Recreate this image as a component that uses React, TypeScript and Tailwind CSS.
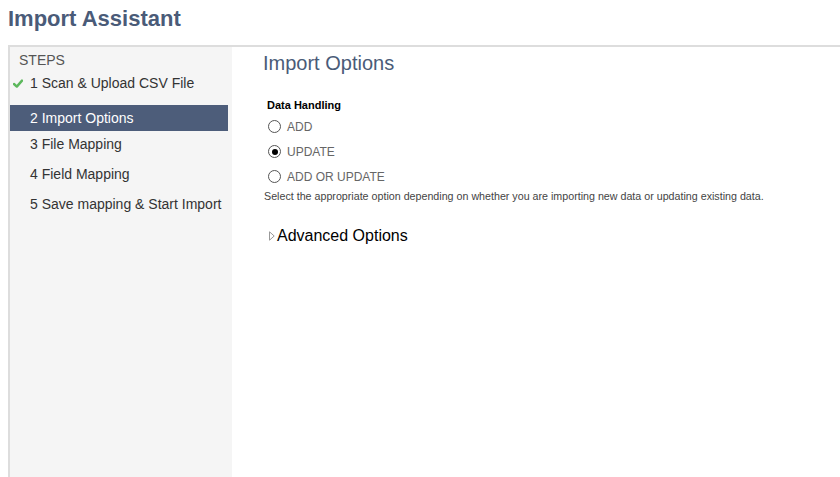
import React from 'react';

const steps = [
  { n: 1, label: 'Scan & Upload CSV File', done: true },
  { n: 2, label: 'Import Options', active: true },
  { n: 3, label: 'File Mapping' },
  { n: 4, label: 'Field Mapping' },
  { n: 5, label: 'Save mapping & Start Import' },
];

const options = ['ADD', 'UPDATE', 'ADD OR UPDATE'];

function Check() {
  return (
    <svg width="10" height="9" viewBox="0 0 10 9" className="mr-[7px]">
      <path d="M1 5 L3.8 7.6 L9 1.6" fill="none" stroke="#5cb85c" strokeWidth="2.4" strokeLinecap="round" strokeLinejoin="round" />
    </svg>
  );
}

function Radio({ checked }: { checked?: boolean }) {
  return (
    <span className="w-[13px] h-[13px] rounded-full border border-[#555] bg-white flex items-center justify-center mr-[6px]">
      {checked && <span className="w-[6px] h-[6px] rounded-full bg-black" />}
    </span>
  );
}

export default function App() {
  const selected = 'UPDATE';

  return (
    <div className="h-screen flex flex-col pl-[8px] bg-white font-['Liberation_Sans',Arial,sans-serif]">
      <h1 className="pt-[6px] mb-[13px] text-[22px] leading-[26px] font-bold text-[#4a5b78]">Import Assistant</h1>

      <div className="flex-1 flex border-t-2 border-l-2 border-[#dddddd]">
        {/* steps */}
        <div className="w-[222px] bg-[#f5f5f5] pr-[4px] pt-[5px] flex flex-col">
          <div className="pl-[9px] text-[14px] leading-[16px] text-[#555]">STEPS</div>
          {steps.map((s, i) => (
            <div
              key={s.n}
              className={
                'h-[26px] flex items-center text-[14px] ' +
                (i === 0 ? 'mt-[2px] pl-[3px] ' : i === 1 ? 'mt-[9px] pl-[20px] ' : i === 2 ? 'pl-[20px] ' : 'mt-[4px] pl-[20px] ') +
                (s.active ? 'bg-[#4d5d7a] text-white' : 'text-[#333]')
              }
            >
              {s.done && <Check />}
              {s.n} {s.label}
            </div>
          ))}
        </div>

        {/* content */}
        <div className="flex-1 pt-[5px] pl-[31px]">
          <h2 className="text-[20px] leading-[23px] text-[#4a5b78]">Import Options</h2>

          <div className="mt-[24px] pl-[4px] text-[11px] leading-[13px] font-bold text-black">Data Handling</div>
          <div className="flex flex-col pl-[5px] mt-[2px]">
            {options.map((o) => (
              <label key={o} className="h-[25px] flex items-center text-[12px] text-[#666]">
                <Radio checked={o === selected} />
                {o}
              </label>
            ))}
          </div>
          <p className="mt-[1px] pl-[1px] text-[10.7px] leading-[13px] text-[#444]">
            Select the appropriate option depending on whether you are importing new data or updating existing data.
          </p>

          <div className="mt-[23px] pl-[6px] flex items-center text-[16px] leading-[19px] text-black">
            <svg width="6" height="10" viewBox="0 0 6 10" className="mr-[2px]">
              <path d="M0.5 0.8 L5.2 5 L0.5 9.2 Z" fill="none" stroke="#999" strokeWidth="1" />
            </svg>
            Advanced Options
          </div>
        </div>
      </div>
    </div>
  );
}
